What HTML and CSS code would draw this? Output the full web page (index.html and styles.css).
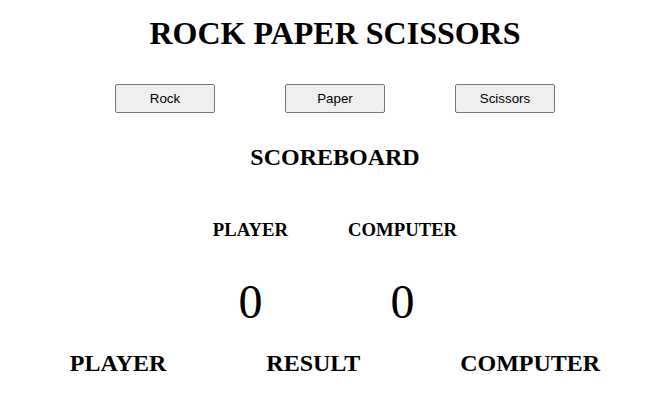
FILE: index.html
```html
<!DOCTYPE html>
<html lang="en">
<head>
<meta charset="utf-8">
<title>Rock Paper Scissors</title>
<link rel="stylesheet" href="styles.css">
</head>
<body>
<div class="page">
  <h1 class="title">ROCK PAPER SCISSORS</h1>
  <div class="choices">
    <button class="choice">Rock</button>
    <button class="choice">Paper</button>
    <button class="choice">Scissors</button>
  </div>
  <h2 class="board-title">SCOREBOARD</h2>
  <div class="scores">
    <div class="score-col">
      <h3 class="score-label">PLAYER</h3>
      <div class="score-value">0</div>
    </div>
    <div class="score-col">
      <h3 class="score-label">COMPUTER</h3>
      <div class="score-value">0</div>
    </div>
  </div>
  <div class="results">
    <h2 class="result-label">PLAYER</h2>
    <h2 class="result-label">RESULT</h2>
    <h2 class="result-label">COMPUTER</h2>
  </div>
</div>
</body>
</html>
```

FILE: styles.css
```css
html, body {
  margin: 0;
  padding: 0;
  background: #ffffff;
}

body {
  font-family: "Liberation Serif", "Times New Roman", serif;
  color: #000000;
}

.page {
  padding: 15px 0 0 12px;
  display: flex;
  flex-direction: column;
  align-items: center;
}

.title {
  margin: 0;
  font-size: 32px;
  line-height: 36px;
  font-weight: bold;
  text-align: center;
}

.choices {
  margin-top: 33px;
  display: flex;
  justify-content: center;
  gap: 70px;
}

.choice {
  box-sizing: border-box;
  width: 100px;
  height: 29px;
  padding: 0;
  font-family: "Liberation Sans", Arial, sans-serif;
  font-size: 13.33px;
  color: #000000;
  background: #efefef;
  border: 1px solid #767676;
  border-radius: 2px;
}

.board-title {
  margin: 30px 0 0 0;
  font-size: 24px;
  line-height: 28px;
  font-weight: bold;
}

.scores {
  margin-top: 48px;
  display: flex;
  justify-content: center;
  gap: 60px;
}

.score-col {
  display: flex;
  flex-direction: column;
  align-items: center;
}

.score-label {
  margin: 0;
  font-size: 18.72px;
  line-height: 22px;
  font-weight: bold;
}

.score-value {
  margin-top: 33px;
  font-size: 48px;
  line-height: 56px;
}

.results {
  margin-top: 19px;
  display: flex;
  justify-content: center;
  gap: 100px;
}

.result-label {
  margin: 0;
  font-size: 24px;
  line-height: 28px;
  font-weight: bold;
}
```
